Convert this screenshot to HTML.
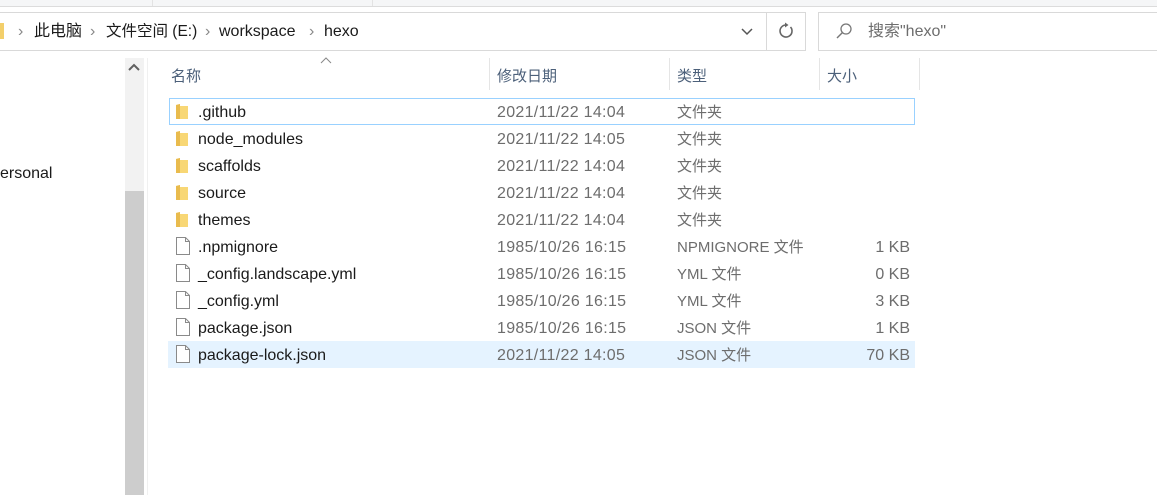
<!DOCTYPE html>
<html><head><meta charset="utf-8"><style>
body{margin:0;width:1157px;height:495px;overflow:hidden;background:#fff;position:relative;font-family:"Liberation Sans","Noto Sans CJK SC",sans-serif;font-size:16px;color:#1a1a1a}
.a{position:absolute;white-space:nowrap}
.row{position:absolute;left:168px;width:747px;height:27px}
.row .t{position:absolute;top:5px;line-height:19px}
.n{left:30px;color:#1a1a1a}
.d{left:329px;color:#6d6d6d;letter-spacing:0.3px}
.ty{left:509px;color:#6d6d6d;font-size:15px}
.s{right:5px;color:#6d6d6d}
.ic{position:absolute;left:7px;top:5px}
.hd{color:#4c607a;font-size:15px}
.sep{position:absolute;top:58px;width:1px;height:32px;background:#e5e5e5}
</style></head><body>
<div class="a" style="left:0;top:0;width:1157px;height:6px;background:#f5f6f7;border-bottom:1px solid #dcdcdc"></div>
<div class="a" style="left:152px;top:0;width:1px;height:6px;background:#e3e3e3"></div>
<div class="a" style="left:372px;top:0;width:1px;height:6px;background:#e3e3e3"></div>
<div class="a" style="left:0;top:12px;width:805px;height:37px;border:1px solid #d9d9d9;border-left:none"></div>
<div class="a" style="left:766px;top:12px;width:1px;height:38px;background:#d9d9d9"></div>
<div class="a" style="left:0;top:23px;width:4px;height:16px;background:#f3cf6b"></div>
<div class="a" style="left:0;top:22px;font-size:16px;line-height:20px;color:#1a1a1a">
<span style="position:absolute;left:18px;color:#888">›</span>
<span style="position:absolute;left:34px">此电脑</span>
<span style="position:absolute;left:90px;color:#888">›</span>
<span style="position:absolute;left:106px;font-size:15.5px">文件空间 (E:)</span>
<span style="position:absolute;left:205px;color:#888">›</span>
<span style="position:absolute;left:219px">workspace</span>
<span style="position:absolute;left:309px;color:#888">›</span>
<span style="position:absolute;left:324px">hexo</span>
</div>
<svg class="a" style="left:740px;top:26px" width="14" height="10"><path d="M2 3 L7 8 L12 3" fill="none" stroke="#555" stroke-width="1.5"/></svg>
<svg class="a" style="left:777px;top:22px" width="18" height="18"><path d="M13.5 5 A6 6 0 1 1 9 3" fill="none" stroke="#666" stroke-width="1.6"/><path d="M8 0.5 L11.5 3 L8 5.5Z" fill="#666"/></svg>
<div class="a" style="left:818px;top:12px;width:345px;height:37px;border:1px solid #d9d9d9"></div>
<svg class="a" style="left:835px;top:22px" width="18" height="18"><circle cx="11" cy="7" r="5" fill="none" stroke="#777" stroke-width="1.3"/><path d="M7.5 10.5 L2 16" stroke="#777" stroke-width="1.4"/></svg>
<div class="a" style="left:868px;top:22px;line-height:20px;color:#6d6d6d">搜索"hexo"</div>
<div class="a" style="left:125px;top:58px;width:19px;height:437px;background:#f2f2f2"></div>
<div class="a" style="left:125px;top:191px;width:19px;height:304px;background:#cdcdcd"></div>
<svg class="a" style="left:127px;top:62px" width="14" height="10"><path d="M2 8 L7 3 L12 8" fill="none" stroke="#606060" stroke-width="2"/></svg>
<div class="a" style="left:147px;top:58px;width:1px;height:437px;background:#f0f0f0"></div>
<div class="a" style="left:0;top:164px;line-height:20px">ersonal</div>
<svg class="a" style="left:320px;top:57px" width="12" height="8"><path d="M1 6 L6 1 L11 6" fill="none" stroke="#888" stroke-width="1"/></svg>
<div class="a hd" style="left:171px;top:65px">名称</div>
<div class="sep" style="left:489px"></div>
<div class="a hd" style="left:497px;top:65px">修改日期</div>
<div class="sep" style="left:669px"></div>
<div class="a hd" style="left:677px;top:65px">类型</div>
<div class="sep" style="left:819px"></div>
<div class="a hd" style="left:827px;top:65px">大小</div>
<div class="sep" style="left:919px"></div>

<div class="row" style="top:98px;border:1px solid #99d1ff;box-sizing:border-box;left:169px;width:746px"></div>
<div class="row" style="top:341px;background:#e5f3ff"></div>

<svg width="0" height="0" style="position:absolute"><defs>
<symbol id="f" viewBox="0 0 14 17"><path d="M1 2 L5 1 L5 3 L13 3 L13 16 L1 16Z" fill="#f8d775"/><path d="M1 2 L5 1 L5 16 L1 16Z" fill="#e9bb4d"/></symbol>
<symbol id="p" viewBox="0 0 14 18"><path d="M0.5 0.5 H9.5 L13.5 4.5 V17.5 H0.5Z" fill="#fff" stroke="#8a8a8a"/><path d="M9.5 0.5 V4.5 H13.5" fill="none" stroke="#8a8a8a"/></symbol>
</defs></svg>

<div class="row" style="top:98px"><svg class="ic" width="14" height="17"><use href="#f"/></svg><span class="t n">.github</span><span class="t d">2021/11/22 14:04</span><span class="t ty">文件夹</span></div>
<div class="row" style="top:125px"><svg class="ic" width="14" height="17"><use href="#f"/></svg><span class="t n">node_modules</span><span class="t d">2021/11/22 14:05</span><span class="t ty">文件夹</span></div>
<div class="row" style="top:152px"><svg class="ic" width="14" height="17"><use href="#f"/></svg><span class="t n">scaffolds</span><span class="t d">2021/11/22 14:04</span><span class="t ty">文件夹</span></div>
<div class="row" style="top:179px"><svg class="ic" width="14" height="17"><use href="#f"/></svg><span class="t n">source</span><span class="t d">2021/11/22 14:04</span><span class="t ty">文件夹</span></div>
<div class="row" style="top:206px"><svg class="ic" width="14" height="17"><use href="#f"/></svg><span class="t n">themes</span><span class="t d">2021/11/22 14:04</span><span class="t ty">文件夹</span></div>
<div class="row" style="top:233px"><svg class="ic" width="14" height="18" style="left:8px;top:4px"><use href="#p"/></svg><span class="t n">.npmignore</span><span class="t d">1985/10/26 16:15</span><span class="t ty">NPMIGNORE 文件</span><span class="t s">1 KB</span></div>
<div class="row" style="top:260px"><svg class="ic" width="14" height="18" style="left:8px;top:4px"><use href="#p"/></svg><span class="t n">_config.landscape.yml</span><span class="t d">1985/10/26 16:15</span><span class="t ty">YML 文件</span><span class="t s">0 KB</span></div>
<div class="row" style="top:287px"><svg class="ic" width="14" height="18" style="left:8px;top:4px"><use href="#p"/></svg><span class="t n">_config.yml</span><span class="t d">1985/10/26 16:15</span><span class="t ty">YML 文件</span><span class="t s">3 KB</span></div>
<div class="row" style="top:314px"><svg class="ic" width="14" height="18" style="left:8px;top:4px"><use href="#p"/></svg><span class="t n">package.json</span><span class="t d">1985/10/26 16:15</span><span class="t ty">JSON 文件</span><span class="t s">1 KB</span></div>
<div class="row" style="top:341px"><svg class="ic" width="14" height="18" style="left:8px;top:4px"><use href="#p"/></svg><span class="t n">package-lock.json</span><span class="t d">2021/11/22 14:05</span><span class="t ty">JSON 文件</span><span class="t s">70 KB</span></div>
</body></html>
